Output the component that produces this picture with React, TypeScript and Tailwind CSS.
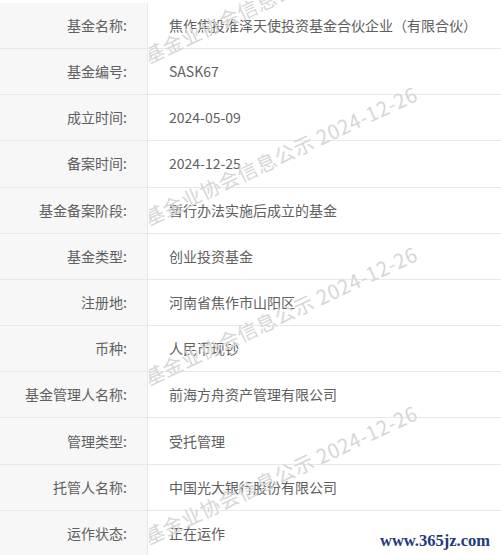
import React from "react";

const rows: [string, string][] = [
  ["基金名称:", "焦作焦投淮泽天使投资基金合伙企业（有限合伙）"],
  ["基金编号:", "SASK67"],
  ["成立时间:", "2024-05-09"],
  ["备案时间:", "2024-12-25"],
  ["基金备案阶段:", "暂行办法实施后成立的基金"],
  ["基金类型:", "创业投资基金"],
  ["注册地:", "河南省焦作市山阳区"],
  ["币种:", "人民币现钞"],
  ["基金管理人名称:", "前海方舟资产管理有限公司"],
  ["管理类型:", "受托管理"],
  ["托管人名称:", "中国光大银行股份有限公司"],
  ["运作状态:", "正在运作"],
];

const marks = [66, 228, 388, 547];

export default function App() {
  return (
    <div
      className="relative w-[501px] h-[555px] overflow-hidden bg-white"
      style={{ fontFamily: '"Noto Sans CJK SC", "Noto Sans", sans-serif' }}
    >
      <div className="pt-[2.8px] flex flex-col">
        {rows.map(([k, v], i) => (
          <div
            key={i}
            className="flex h-[46.2px] border-b border-[#e8e8e8] text-[14px] text-[#606060]"
          >
            <div className="w-[148px] shrink-0 bg-[#f7f7f7] border-r border-[#e8e8e8] flex items-center justify-end pr-[20px]">
              {k}
            </div>
            <div className="flex-1 flex items-center pl-[21px] whitespace-nowrap">{v}</div>
          </div>
        ))}
      </div>
      <div className="absolute inset-y-0 left-[149px] right-0 overflow-hidden pointer-events-none">
        {marks.map((y, i) => (
          <div
            key={i}
            className="absolute left-0 h-[20px] leading-[20px] text-[20px] tracking-[0.6px] text-[#d6d6d6] whitespace-nowrap origin-bottom-left -rotate-[25deg]"
            style={{ top: y - 20 }}
          >
            基金业协会信息公示 2024-12-26
          </div>
        ))}
      </div>
      <div
        className="absolute right-[11px] bottom-[1px] text-[16.5px] font-bold text-[#1d3a7c]"
        style={{ fontFamily: '"Liberation Serif", serif' }}
      >
        www.365jz.com
      </div>
    </div>
  );
}
